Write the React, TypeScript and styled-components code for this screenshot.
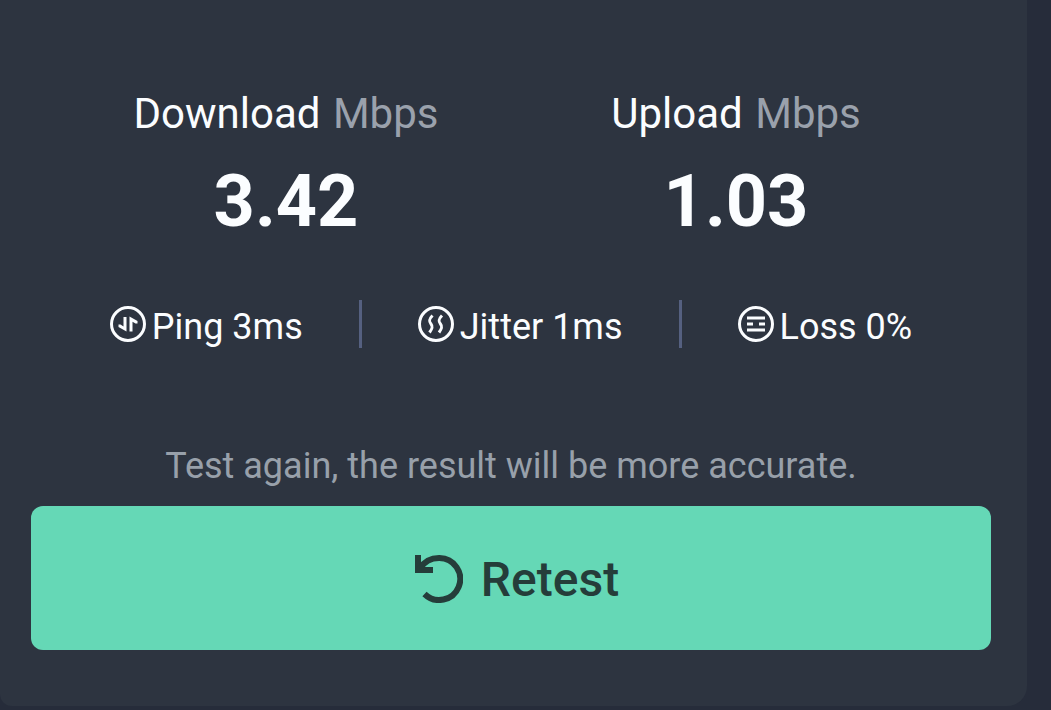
import React from "react";
import styled, { createGlobalStyle } from "styled-components";

const GlobalStyle = createGlobalStyle`
  * { box-sizing: border-box; }
  body {
    margin: 0;
    background: #262c3a;
    color: #fbfdff;
    font-family: Roboto, "Liberation Sans", sans-serif;
  }
`;

const Page = styled.div`
  padding: 0 24px 4px 0;
`;

const Card = styled.main`
  display: flex;
  flex-direction: column;
  padding: 89px 36px 56px 31px;
  background: #2d3440;
  border-radius: 0 0 20px 12px;
`;

const Speeds = styled.section`
  display: grid;
  grid-template-columns: 1fr 1fr;
  padding: 0 30px;
  text-align: center;
`;

const SpeedLabel = styled.h2`
  margin: 0;
  font-size: 42px;
  font-weight: 400;
  line-height: 50px;
`;

const Unit = styled.span`
  margin-left: 2px;
  color: #9aa1ac;
`;

const SpeedValue = styled.p`
  margin: 21px 0 0;
  font-size: 72px;
  font-weight: 700;
  line-height: 84px;
`;

const Stats = styled.ul`
  display: flex;
  justify-content: center;
  margin: 56px 0 0;
  padding: 0;
  list-style: none;
`;

const Stat = styled.li`
  display: flex;
  align-items: center;
  gap: 6px;
  height: 48px;
  padding: 0 56px;
  font-size: 36px;
  line-height: 42px;
  white-space: nowrap;

  & + & {
    border-left: 3px solid #556080;
  }
`;

const StatText = styled.span`
  padding-top: 6px;
`;

const Hint = styled.p`
  margin: 96px 0 0;
  color: #98a0aa;
  font-size: 36px;
  line-height: 44px;
  text-align: center;
`;

const RetestButton = styled.button`
  display: flex;
  align-items: center;
  justify-content: center;
  gap: 18px;
  width: 100%;
  height: 144px;
  margin-top: 18px;
  padding: 2px 0 0 12px;
  border: 0;
  border-radius: 12px;
  background: #65d8b6;
  color: #253d3a;
  font: inherit;
  font-size: 48px;
  font-weight: 500;
  cursor: pointer;
`;

const RingIcon = ({ children }: { children: React.ReactNode }) => (
  <svg width="36" height="36" viewBox="0 0 36 36" fill="none" stroke="currentColor" strokeWidth="3" aria-hidden="true">
    <circle cx="18" cy="18" r="16.5" />
    {children}
  </svg>
);

const PingIcon = () => (
  <RingIcon>
    <path d="M13.5 11H16.500V25.500L8.500 21V18.500H10.500L13.500 20.500ZM19.500 25.500V10.500L27.500 15V17.500H25.500L22.500 15.800V25.500Z" fill="currentColor" stroke="none" />
  </RingIcon>
);

const JitterIcon = () => (
  <RingIcon>
    <path
      d="M14.500 9.500C10.500 13.500 11 15.500 13 18S14.500 22.500 11.500 26.500M24 9.500C20 13.500 20.500 15.500 22.500 18S24 22.500 21 26.500"
      strokeWidth="3"
    />
  </RingIcon>
);

const LossIcon = () => (
  <RingIcon>
    <path d="M9 12H27M9 18H15M21 18H27M9 24H27" strokeWidth="3" />
  </RingIcon>
);

const RetestIcon = () => (
  <svg width="48" height="48" viewBox="0 0 48 48" fill="none" stroke="currentColor" strokeWidth="6" aria-hidden="true">
    <path d="M3 0V15H18" />
    <path d="M5 13.500C9 7 15.500 3 24 3A21 21 0 1 1 9.500 39" />
  </svg>
);

const speeds = [
  { name: "Download", value: "3.42" },
  { name: "Upload", value: "1.03" },
];

const stats = [
  { text: "Ping 3ms", Icon: PingIcon },
  { text: "Jitter 1ms", Icon: JitterIcon },
  { text: "Loss 0%", Icon: LossIcon },
];

export default function App() {
  return (
    <Page>
      <GlobalStyle />
      <Card>
        <Speeds>
          {speeds.map(({ name, value }) => (
            <div key={name}>
              <SpeedLabel>
                {name} <Unit>Mbps</Unit>
              </SpeedLabel>
              <SpeedValue>{value}</SpeedValue>
            </div>
          ))}
        </Speeds>
        <Stats>
          {stats.map(({ text, Icon }) => (
            <Stat key={text}>
              <Icon />
              <StatText>{text}</StatText>
            </Stat>
          ))}
        </Stats>
        <Hint>Test again, the result will be more accurate.</Hint>
        <RetestButton type="button">
          <RetestIcon />
          Retest
        </RetestButton>
      </Card>
    </Page>
  );
}
